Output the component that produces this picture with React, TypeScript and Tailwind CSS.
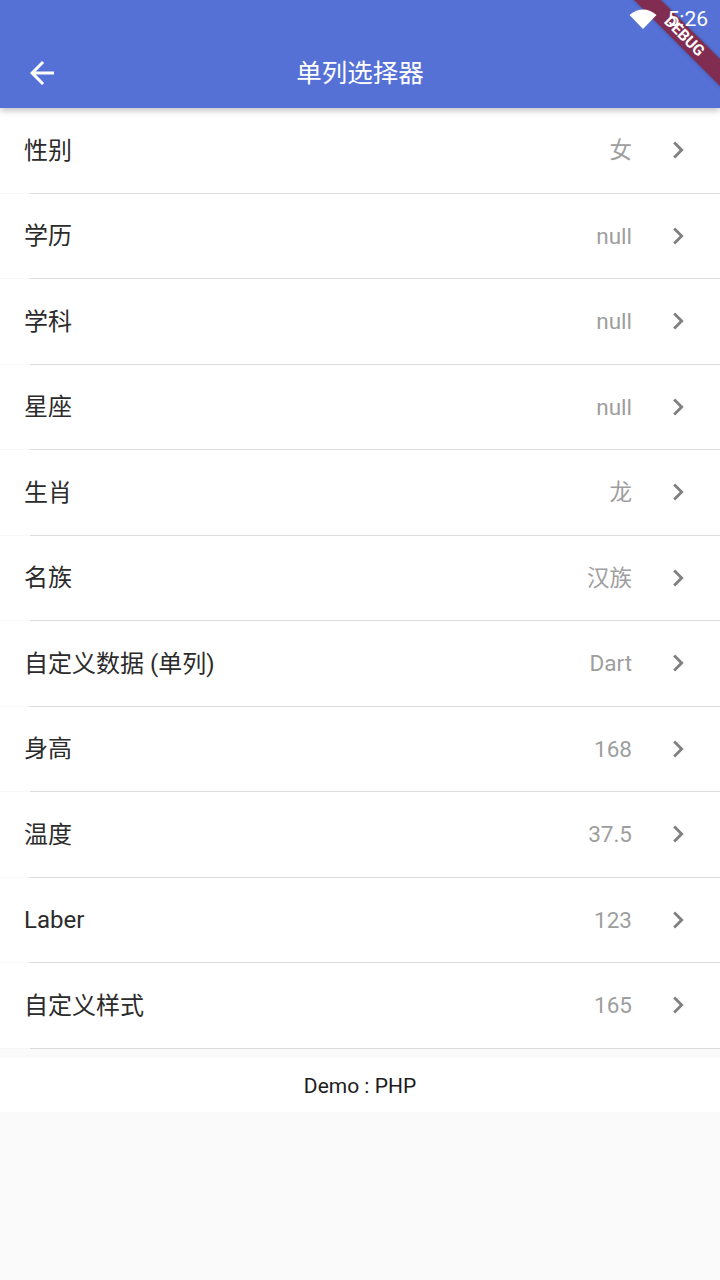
import React from 'react';

const ROWS = [
  { label: '性别', value: '女' },
  { label: '学历', value: 'null' },
  { label: '学科', value: 'null' },
  { label: '星座', value: 'null' },
  { label: '生肖', value: '龙' },
  { label: '名族', value: '汉族' },
  { label: '自定义数据 (单列)', value: 'Dart' },
  { label: '身高', value: '168' },
  { label: '温度', value: '37.5' },
  { label: 'Laber', value: '123' },
  { label: '自定义样式', value: '165' },
];

const FONT = "font-['Roboto','Noto_Sans_CJK_SC',sans-serif]";

const Row: React.FC<{ label: string; value: string }> = ({ label, value }) => (
  <div className="relative h-[85.5px] bg-white flex items-center pl-[24px] pr-[25px]">
    <span className="flex-1 text-[24px] leading-[32px] text-[#2b2b2b]">{label}</span>
    <span className="text-[22.5px] leading-[32px] pb-[1px] text-[#9e9e9e]">{value}</span>
    <svg width="34" height="34" viewBox="0 0 24 24" className="ml-[29px] mb-[1px]" fill="#808080">
      <path d="M10 6L8.59 7.41 13.17 12l-4.58 4.59L10 18l6-6z" />
    </svg>
    <div className="absolute bottom-0 left-0 w-[30px] h-[1px] bg-[#f7f7f7]" />
    <div className="absolute bottom-0 left-[30px] right-0 h-[1px] bg-[#dcdcdc]" />
  </div>
);

export default function App() {
  return (
    <div className={`relative w-[720px] h-[1280px] overflow-hidden bg-[#fafafa] ${FONT}`}>
      <header className="relative z-10 h-[108px] bg-[#5571d6] shadow-[0_3px_6px_rgba(0,0,0,0.22)] text-white">
        {/* status icons sit above the debug ribbon */}
        <div className="relative z-30 flex h-[38px] items-center justify-end pr-[12px]">
          <svg width="28" height="20" viewBox="0 0 28 20" className="mr-[11px] mb-[1px]">
            <path d="M0.5 6 C8 -1.5 20 -1.5 27.5 6 L14 20 Z" fill="white" />
          </svg>
          <span className="text-[21px] leading-[24px]">5:26</span>
        </div>
        <div className="flex h-[70px] items-center pl-[24px]">
          <svg width="36" height="36" viewBox="0 0 24 24" fill="white">
            <path d="M20 11H7.83l5.59-5.59L12 4l-8 8 8 8 1.41-1.41L7.83 13H20v-2z" />
          </svg>
          <h1 className="absolute left-0 right-0 text-center text-[25.5px] leading-[32px]">单列选择器</h1>
        </div>

        {/* debug ribbon */}
        <div className="absolute z-20 top-[27px] right-[-49px] w-[170px] h-[19px] rotate-45 bg-[#84284a]/95 shadow-[0_0_4px_rgba(0,0,0,0.25)] flex items-center justify-center text-[15.5px] font-bold text-white">
          DEBUG
        </div>
      </header>

      <main>
        {ROWS.map((row) => (
          <Row key={row.label} label={row.label} value={row.value} />
        ))}
        <div className="mt-[9.5px] h-[54px] bg-white flex items-center justify-center pt-[3px] text-[21px] text-[#1c1c1c]">
          Demo : PHP
        </div>
      </main>
    </div>
  );
}
